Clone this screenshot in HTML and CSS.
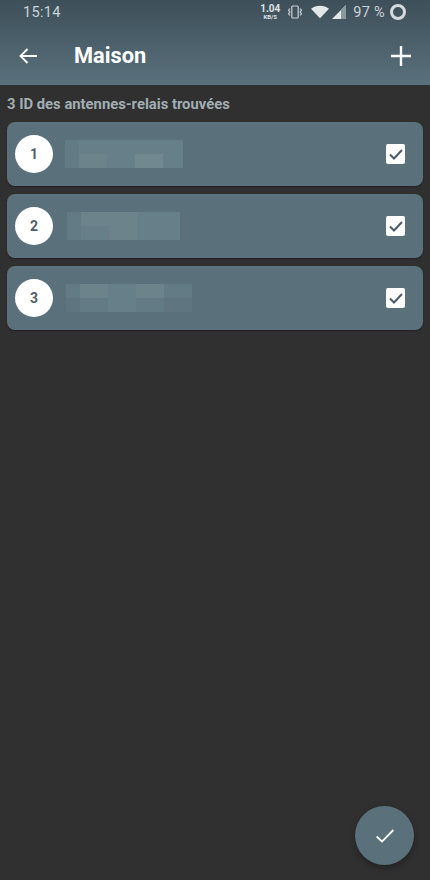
FILE: index.html
```html
<!DOCTYPE html>
<html lang="fr">

<head>
    <meta charset="UTF-8">
    <meta name="viewport" content="width=device-width, initial-scale=1.0">
    <title>Maison</title>

    <link rel="stylesheet" href="styles.css">
</head>

<body>
    <header class="top">
        <div class="status">
            <span class="clock">15:14</span>
            <div class="status-right">
                <div class="speed"><b>1.04</b><small>KB/S</small></div>
                <svg class="ic-vibrate" width="14" height="14" viewBox="0 0 14 14" fill="none" stroke="#c9d0d3" stroke-width="1.2">
                    <rect x="3.800" y="1" width="6.400" height="12" rx="1"/>
                    <path d="M1.800 3.500 .6 5.200 1.800 7 .6 8.800 1.800 10.500M12.200 3.500 13.400 5.200 12.200 7 13.400 8.800 12.200 10.500"/>
                </svg>
                <svg class="ic-wifi" width="18" height="14" viewBox="0 0 20 14">
                    <path d="M0 3.400C2.800 1.200 6.200 0 10 0s7.200 1.200 10 3.400L10 14z" fill="#e4e7e8"/>
                </svg>
                <svg class="ic-signal" width="14" height="14" viewBox="0 0 14 14">
                    <path d="M0 14 14 0v14z" fill="#e4e7e8"/>
                    <path d="M9 5 14 0v14H9z" fill="#8b989e"/>
                </svg>
                <span class="battery-text">97 %</span>
                <span class="battery-ring"></span>
            </div>
        </div>
        <div class="toolbar">
            <svg class="ic-back" width="18" height="16" viewBox="0 0 18 16" fill="none" stroke="#fff" stroke-width="1.800">
                <path d="M18 8H1.500M8.500 1 1.500 8l7 7"/>
            </svg>
            <h1>Maison</h1>
            <svg class="ic-add" width="20" height="20" viewBox="0 0 20 20" fill="none" stroke="#fff" stroke-width="2.400">
                <path d="M10 0v20M0 10h20"/>
            </svg>
        </div>
    </header>

    <main>
        <p class="found">3 ID des antennes-relais trouvées</p>

        <section class="list">
            <div class="row">
                <span class="num">1</span>
                <div class="blur blur-1">
                    <i class="s2"></i><i class="s3"></i><i class="s3"></i><i class="s3"></i><i class="s3"></i>
                    <i class="s2"></i><i class="s4"></i><i class="s3"></i><i class="s5"></i><i class="s3"></i>
                </div>
                <span class="check">
                    <svg width="14" height="11" viewBox="0 0 14 11" fill="none" stroke="#4a5c66" stroke-width="2">
                        <path d="M1 5.500 5 9.500 13 1"/>
                    </svg>
                </span>
            </div>
            <div class="row">
                <span class="num">2</span>
                <div class="blur blur-2">
                    <i class="s2"></i><i class="s4"></i><i class="s4"></i><i class="s3"></i><i class="s3"></i>
                    <i class="s2"></i><i class="s3"></i><i class="s4"></i><i class="s3"></i><i class="s3"></i>
                </div>
                <span class="check">
                    <svg width="14" height="11" viewBox="0 0 14 11" fill="none" stroke="#4a5c66" stroke-width="2">
                        <path d="M1 5.500 5 9.500 13 1"/>
                    </svg>
                </span>
            </div>
            <div class="row">
                <span class="num">3</span>
                <div class="blur blur-3">
                    <i class="s2"></i><i class="s4"></i><i class="s3"></i><i class="s4"></i><i class="s2"></i>
                    <i class="s1"></i><i class="s2"></i><i class="s3"></i><i class="s2"></i><i class="s1"></i>
                </div>
                <span class="check">
                    <svg width="14" height="11" viewBox="0 0 14 11" fill="none" stroke="#4a5c66" stroke-width="2">
                        <path d="M1 5.500 5 9.500 13 1"/>
                    </svg>
                </span>
            </div>
        </section>
    </main>

    <button class="fab" aria-label="Valider">
        <svg width="18" height="14" viewBox="0 0 18 14" fill="none" stroke="#fff" stroke-width="1.800">
            <path d="M.7 7.500 6 12.600 17.300 1"/>
        </svg>
    </button>
</body>

</html>
```

FILE: styles.css
```css
html,
body {
    padding: 0;
    margin: 0;
}

* {
    box-sizing: border-box;
}

body {
    position: relative;
    width: 430px;
    height: 880px;
    overflow: hidden;
    background-color: #303030;
    color: white;
    font-family: Roboto, "Liberation Sans", sans-serif;
}

.top {
    height: 85px;
    background: linear-gradient(#3d4f59, #5a717d);
}

.status {
    height: 24px;
    padding: 0 24px 0 23px;
    display: flex;
    align-items: center;
    justify-content: space-between;
    color: #ccd2d5;
}

.clock {
    font-size: 14.500px;
    letter-spacing: 0.3px;
    padding-top: 1px;
}

.status-right {
    display: flex;
    align-items: center;
}

.speed {
    display: flex;
    flex-direction: column;
    align-items: center;
    line-height: 1;
    color: #dfe3e5;
    margin-right: 8px;
}

.speed b {
    font-size: 10px;
    font-weight: 700;
}

.speed small {
    font-size: 6px;
    font-weight: 700;
}

.ic-vibrate {
    margin-right: 9px;
}

.ic-wifi {
    margin-right: 3px;
}

.ic-signal {
    margin-right: 7px;
}

.battery-text {
    font-size: 14.500px;
    letter-spacing: 0.3px;
    margin-right: 5px;
}

.battery-ring {
    width: 16px;
    height: 16px;
    border: 3px solid #d5dadc;
    border-radius: 50%;
}

.toolbar {
    height: 61px;
    padding: 2px 19px 0;
    display: flex;
    align-items: center;
}

.ic-back {
    margin-right: 37px;
}

h1 {
    margin: 0;
    flex: 1;
    font-size: 21.800px;
    font-weight: 700;
}

main {
    padding: 0 7px;
}

.found {
    margin: 0;
    height: 37px;
    padding-top: 11px;
    font-size: 14.800px;
    font-weight: 700;
    line-height: 16px;
    color: #a3aeb3;
}

.list {
    display: flex;
    flex-direction: column;
    gap: 8px;
}

.row {
    height: 64px;
    padding: 0 18px 0 8px;
    display: flex;
    align-items: center;
    background-color: #5a717c;
    border-radius: 8px;
    box-shadow: 0 1px 2px rgba(0, 0, 0, 0.3);
}

.num {
    width: 38px;
    height: 38px;
    display: flex;
    align-items: center;
    justify-content: center;
    background-color: white;
    border-radius: 50%;
    color: #4f5f69;
    font-size: 14px;
    font-weight: 700;
}

.blur {
    display: grid;
    grid-template-rows: 14px 14px;
}

.blur i {
    display: block;
}

.blur-1 {
    margin-left: 12px;
    grid-template-columns: 14px 28px 28px 28px 20px;
}

.blur-2 {
    margin-left: 14px;
    grid-template-columns: 14px 28px 28px 28px 15px;
}

.blur-3 {
    margin-left: 13px;
    grid-template-columns: 14px 28px 28px 28px 28px;
}

.s1 { background-color: #5f7681; }
.s2 { background-color: #637b85; }
.s3 { background-color: #677f89; }
.s4 { background-color: #6c838c; }
.s5 { background-color: #728890; }

.check {
    width: 19px;
    height: 20px;
    margin-left: auto;
    display: flex;
    align-items: center;
    justify-content: center;
    background-color: white;
    border-radius: 2px;
}

.fab {
    position: absolute;
    left: 355px;
    top: 806px;
    width: 59px;
    height: 59px;
    padding: 0;
    border: none;
    border-radius: 50%;
    display: flex;
    align-items: center;
    justify-content: center;
    background-color: #5a717c;
    box-shadow: 0 3px 6px rgba(0, 0, 0, 0.3);
}
```
